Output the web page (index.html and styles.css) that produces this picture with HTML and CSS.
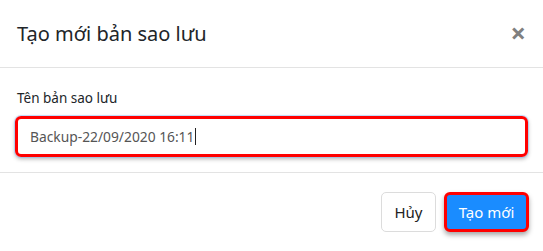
FILE: index.html
```html
<!DOCTYPE html>
<html lang="vi">
<head>
    <meta charset="UTF-8">
    <title>Tạo mới bản sao lưu</title>
    <link rel="stylesheet" href="styles.css">
</head>
<body>
    <div class="modal">
        <!-- Header -->
        <div class="modal-header">
            <h4 class="modal-title">Tạo mới bản sao lưu</h4>
            <span class="close">&times;</span>
        </div>

        <!-- Body -->
        <div class="modal-body">
            <label class="field-label">Tên bản sao lưu</label>
            <div class="field-input">Backup-22/09/2020 16:11<span class="caret"></span></div>
        </div>

        <!-- Footer -->
        <div class="modal-footer">
            <button class="btn btn-cancel">Hủy</button>
            <button class="btn btn-primary">Tạo mới</button>
        </div>
    </div>
</body>
</html>
```

FILE: styles.css
```css
body {
    margin: 0;
    background: white;
    font-family: "Noto Sans", "Open Sans", sans-serif;
    color: #212529;
}

.modal {
    width: 543px;
    height: 251px;
    background: white;
}

.modal-header {
    height: 67px;
    padding: 0 17px 0 17px;
    display: flex;
    align-items: center;
    justify-content: space-between;
    border-bottom: 1px solid #e3e3e3;
}

.modal-title {
    margin: 0;
    font-size: 20px;
    font-weight: normal;
    color: #212529;
}

.close {
    font-size: 27px;
    font-weight: bold;
    color: #808080;
    margin-top: -2px;
}

.modal-body {
    height: 104px;
    padding: 21px 15px 0 15px;
    box-sizing: border-box;
}

.field-label {
    display: block;
    font-size: 13.5px;
    margin-left: 2px;
    margin-bottom: 9px;
}

.field-input {
    height: 41px;
    box-sizing: border-box;
    border: 3px solid #ff0000;
    border-radius: 6px;
    padding: 0 12px;
    display: flex;
    align-items: center;
    font-size: 13.8px;
    color: #555;
    box-shadow: 0 0 0 1px rgba(128, 189, 255, 0.45), 0 2px 4px rgba(0, 0, 0, 0.3);
}

.caret {
    display: inline-block;
    width: 1px;
    height: 17px;
    background: #222;
    margin-left: 1px;
}

.modal-footer {
    border-top: 1px solid #e3e3e3;
    height: 78px;
    padding: 19px 14px 0 0;
    box-sizing: border-box;
    display: flex;
    justify-content: flex-end;
    align-items: flex-start;
    gap: 8px;
}

.btn {
    height: 40px;
    padding: 0;
    font-family: "Noto Sans", "Open Sans", sans-serif;
    font-size: 15px;
    border-radius: 5px;
    cursor: pointer;
}

.btn-cancel {
    width: 55px;
    background: white;
    color: #222;
    border: 1px solid #dcdcdc;
}

.btn-primary {
    width: 85px;
    background: #1a8cff;
    color: white;
    border: 3px solid #ff0000;
    border-radius: 6px;
    box-shadow: 0 3px 5px rgba(0, 0, 0, 0.35);
}
```
